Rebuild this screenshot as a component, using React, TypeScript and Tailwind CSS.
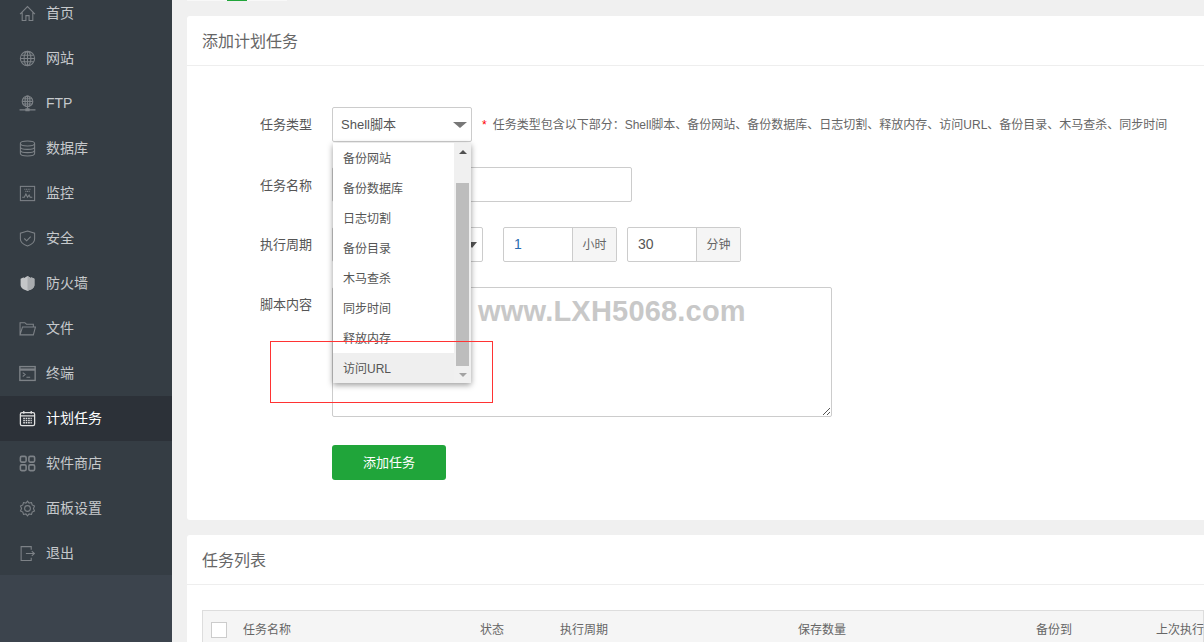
import React from "react";

const cjk = '"Liberation Sans","Noto Sans CJK SC",sans-serif';

const icons: Record<string, React.ReactNode> = {
  home: <path d="M1 8.500 8 1.500l7 7M3 7v7.500h3.500v-4.500h3v4.500H13V7" />,
  globe: <><circle cx="8" cy="8" r="6.700" /><ellipse cx="8" cy="8" rx="3.200" ry="6.700" /><path d="M1.300 8h13.400M2.300 5h11.400M2.300 11h11.400M8 1.300v13.400" /></>,
  ftp: <><circle cx="8" cy="6" r="5" /><ellipse cx="8" cy="6" rx="2.300" ry="5" /><path d="M3 6h10M3.600 3.500h8.800M3.600 8.500h8.800M8 1v10M.5 14h15M8 11v2" /><rect x="6.500" y="13" width="3" height="1.800" fill="currentColor" /></>,
  db: <><ellipse cx="8" cy="3.300" rx="6.700" ry="2.300" /><path d="M1.300 3.300v9.400c0 1.300 3 2.300 6.700 2.300s6.700-1 6.700-2.300V3.300M1.300 6.500c0 1.300 3 2.300 6.700 2.300s6.700-1 6.700-2.300M1.300 9.600c0 1.300 3 2.300 6.700 2.300s6.700-1 6.700-2.300" /></>,
  monitor: <><rect x="1.300" y="1.300" width="13.400" height="13.400" /><path d="M3 11.500h2l1.500-3 1.500 3 1.500-2 1 2h2" /><path d="M5 4h6M6 6h4" strokeDasharray="1 .6" /></>,
  shield: <><path d="M8 1 14.700 3v5.500c0 3-2.700 5.200-6.700 6.500-4-1.300-6.700-3.500-6.700-6.500V3z" /><path d="m5 8 2.200 2.200L11 6.200" /></>,
  wall: <><path d="M1.500 3.500 4.500 2v1L8 1l3.500 2V2l3 1.500v6c0 2.500-2.500 4.300-6.500 5.500-4-1.200-6.500-3-6.500-5.500z" fill="#c4c6c8" stroke="none" /><path d="M8 1l3.500 2V2l3 1.500v6c0 2.500-2.500 4.300-6.500 5.500z" fill="#a9acaf" stroke="none" /></>,
  folder: <path d="M1 14V2.500h4.500L7 4h6.500v2.500M1 14l2.300-7.500h12.200L13.500 14z" />,
  term: <><rect x=".8" y="1.500" width="14.400" height="13" strokeWidth="1.300" /><path d="M.8 4.300h14.400" strokeWidth="2.200" /><path d="m3.500 7.200 2.300 1.800-2.300 1.800M7 11.500h3.500" /></>,
  cal: <><rect x="1.300" y="2.500" width="13.400" height="12.200" rx="1.500" strokeWidth="1.200" /><path d="M1.300 5.500h13.400M4.500 1v2.500M11.500 1v2.500" strokeWidth="1.200" /><path d="M4 8h8M4 10h8M4 12h8" strokeDasharray="1.500 .8" strokeWidth="1.300" /></>,
  apps: <><rect x="1.300" y="1.300" width="5.400" height="5.400" rx="1.200" strokeWidth="1.500" /><rect x="9.300" y="1.300" width="5.400" height="5.400" rx="1.200" strokeWidth="1.500" /><rect x="1.300" y="9.300" width="5.400" height="5.400" rx="1.200" strokeWidth="1.500" /><rect x="9.300" y="9.300" width="5.400" height="5.400" rx="1.200" strokeWidth="1.500" /></>,
  gear: <><path d="m8 1 1.500 1.900 2.300-.5.6 2.300 2.200 1-1 2.300 1 2.300-2.200 1-.6 2.300-2.300-.5L8 15l-1.500-1.900-2.300.5-.6-2.300-2.200-1 1-2.300-1-2.300 2.200-1 .6-2.300 2.300.5z" /><circle cx="8" cy="8" r="2.700" /></>,
  exit: <path d="M11.500 4.500V1.500h-9.500v13h9.500V12M6.500 8h8M12 5.700l2.500 2.300-2.500 2.300" />,
};

const menu: [string, string, boolean?][] = [
  ["home", "首页"],
  ["globe", "网站"],
  ["ftp", "FTP"],
  ["db", "数据库"],
  ["monitor", "监控"],
  ["shield", "安全"],
  ["wall", "防火墙"],
  ["folder", "文件"],
  ["term", "终端"],
  ["cal", "计划任务", true],
  ["apps", "软件商店"],
  ["gear", "面板设置"],
  ["exit", "退出"],
];

const options = ["备份网站", "备份数据库", "日志切割", "备份目录", "木马查杀", "同步时间", "释放内存", "访问URL"];

function Caret({ className }: { className: string }) {
  return <span className={"w-0 h-0 border-x-[7px] border-x-transparent border-t-[6px] " + className} />;
}

export default function App() {
  return (
    <div className="w-[1204px] h-[642px] overflow-hidden flex bg-[#f0f0f0] text-[13px] text-[#555]" style={{ fontFamily: cjk }}>
      <aside className="w-[172px] h-full shrink-0 bg-[#3c444d]">
        <div className="h-[584px] bg-[#353d44] -mt-[9px] overflow-hidden">
          {menu.map(([ic, label, active]) => (
            <div key={label} className={"h-[45px] flex items-center pl-[19px] gap-[10px] text-[14px] " + (active ? "bg-[#2c3138] text-white" : "text-[#c6c9cc]")}>
              <svg viewBox="0 0 16 16" width="17" height="17" fill="none" stroke="currentColor" strokeWidth="1" className={active ? "text-[#e0e0e0]" : "text-[#7d8287]"}>
                {icons[ic]}
              </svg>
              <span>{label}</span>
            </div>
          ))}
        </div>
      </aside>
      <main className="flex-1 min-w-0 pl-[15px]">
        <div className="h-[16px]">
          <div className="w-[100px] h-px bg-[#f8f8f8] pl-[40px]">
            <div className="w-[20px] h-px bg-[#20a53a]" />
          </div>
        </div>
        <section className="h-[504px] bg-white rounded-l-[3px] flex flex-col">
          <h2 className="h-[50px] shrink-0 flex items-center pl-[15px] pt-[2px] text-[16px] text-[#666] border-b border-[#eee] font-normal">添加计划任务</h2>
          <div className="relative flex-1 pt-[41px] pl-[73px]">
            <div className="flex items-center h-[35px]">
              <label className="w-[72px] text-[#555]">任务类型</label>
              <div className="w-[140px] h-[35px] border border-[#ccc] rounded-[2px] flex items-center justify-between pl-[8px] pr-[4px] bg-white">
                <span className="text-[#555]">Shell脚本</span>
                <Caret className="border-t-[#777]" />
              </div>
              <p className="ml-[10px] text-[12px] text-[#666]"><span className="text-[#f00] mr-[6px]">*</span>任务类型包含以下部分：Shell脚本、备份网站、备份数据库、日志切割、释放内存、访问URL、备份目录、木马查杀、同步时间</p>
            </div>
            <div className="flex items-center h-[35px] mt-[25px]">
              <label className="w-[72px] pt-[2px]">任务名称</label>
              <div className="w-[300px] h-[35px] border border-[#ccc] rounded-[2px]" />
            </div>
            <div className="flex items-center h-[35px] mt-[25px]">
              <label className="w-[72px]">执行周期</label>
              <div className="w-[151px] h-[35px] border border-[#ccc] rounded-[2px] flex items-center justify-end pr-[5px]">
                <Caret className="border-t-[#555] !border-x-[5px]" />
              </div>
              <div className="ml-[20px] w-[114px] h-[35px] border border-[#ccc] rounded-[2px] flex">
                <span className="flex-1 pl-[10px] flex items-center text-[14px] text-[#2a6cb0]">1</span>
                <span className="w-[44px] bg-[#f5f5f5] border-l border-[#ccc] flex items-center justify-center text-[12px] text-[#666]">小时</span>
              </div>
              <div className="ml-[10px] w-[114px] h-[35px] border border-[#ccc] rounded-[2px] flex">
                <span className="flex-1 pl-[10px] flex items-center text-[14px]">30</span>
                <span className="w-[44px] bg-[#f5f5f5] border-l border-[#ccc] flex items-center justify-center text-[12px] text-[#666]">分钟</span>
              </div>
            </div>
            <div className="flex mt-[25px]">
              <label className="w-[72px] pt-[8px]">脚本内容</label>
              <div className="relative w-[500px] h-[130px] border border-[#ccc] rounded-[2px]">
                <span className="absolute left-[145px] top-[7px] text-[29px] font-bold text-[#c8c8c8] leading-[32px] tracking-[.2px]">www.LXH5068.com</span>
                <svg viewBox="0 0 10 10" width="10" height="10" className="absolute right-0 bottom-0 text-[#555]" stroke="currentColor" fill="none"><path d="M9 2 2 9M9 6 6 9" /></svg>
              </div>
            </div>
            <button className="block ml-[72px] mt-[28px] w-[114px] h-[35px] rounded-[3px] bg-[#20a53a] text-white text-[13px]">添加任务</button>

            {/* open select list */}
            <div className="absolute left-[146px] top-[77px] w-[138px] h-[240px] bg-white shadow-[0_2px_6px_rgba(0,0,0,.4)] flex z-10">
              <ul className="flex-1 min-w-0">
                {options.map((o, i) => (
                  <li key={o} className={"h-[30px] flex items-center pl-[10px] pt-[2px] text-[12px] text-[#555] " + (i === 7 ? "bg-[#efefef]" : "")}>{o}</li>
                ))}
              </ul>
              <div className="w-[17px] bg-[#f0f0f0] flex flex-col items-center">
                <span className="h-[17px] shrink-0 flex items-center"><span className="w-0 h-0 border-x-[4px] border-x-transparent border-b-[4px] border-b-[#505050]" /></span>
                <span className="w-[13px] h-[183px] shrink-0 mt-[23px] bg-[#bdbdbd]" />
                <span className="h-[17px] shrink-0 flex items-center"><span className="w-0 h-0 border-x-[4px] border-x-transparent border-t-[4px] border-t-[#a3a3a3]" /></span>
              </div>
            </div>
            {/* annotation box */}
            <div className="absolute left-[83px] top-[275px] w-[223px] h-[62px] border border-[#f33] z-20" />
          </div>
        </section>
        <section className="mt-[15px] h-[200px] bg-white rounded-l-[3px] overflow-hidden">
          <h2 className="h-[50px] flex items-center pl-[15px] pt-[2px] text-[16px] text-[#666] border-b border-[#eee] font-normal">任务列表</h2>
          <div className="ml-[15px] mt-[25px] h-[40px] bg-[#f5f5f5] border border-[#ddd] flex items-center text-[12px] text-[#666]">
            <span className="ml-[8px] mr-[16px] w-[16px] h-[16px] shrink-0 border border-[#ccc] bg-white" />
            <span className="w-[237px] shrink-0">任务名称</span>
            <span className="w-[80px] shrink-0">状态</span>
            <span className="w-[238px] shrink-0">执行周期</span>
            <span className="w-[238px] shrink-0">保存数量</span>
            <span className="w-[120px] shrink-0">备份到</span>
            <span className="shrink-0 whitespace-nowrap">上次执行</span>
          </div>
        </section>
      </main>
    </div>
  );
}
